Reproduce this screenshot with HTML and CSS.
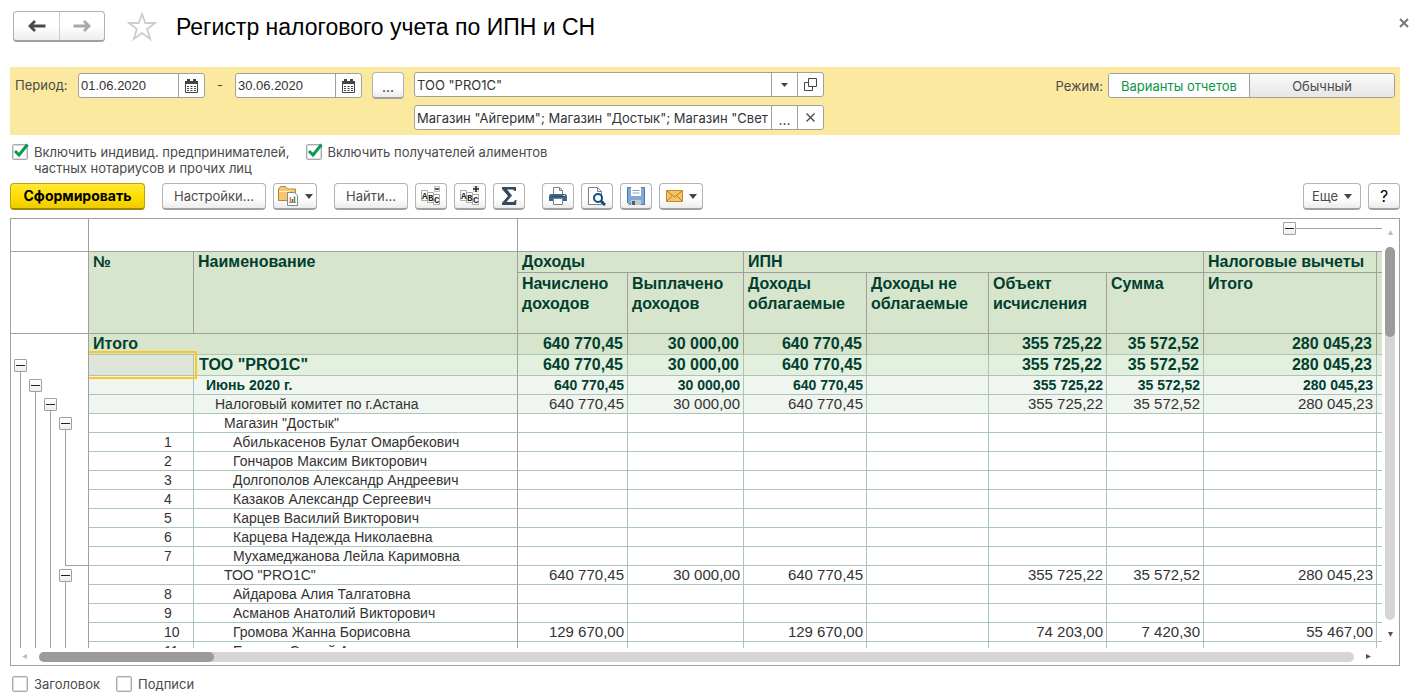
FILE: index.html
```html
<!DOCTYPE html>
<html lang="ru">
<head>
<meta charset="utf-8">
<title>Регистр налогового учета по ИПН и СН</title>
<link rel="stylesheet" href="styles.css">
</head>
<body>
<main class="page">
  <header class="titlebar">
    <div class="nav">
      <button type="button" class="nav-btn" aria-label="Назад"><svg width="18" height="12" viewBox="0 0 18 12"><path d="M7 1 2 6l5 5M2.500 6H17.500" fill="none" stroke="#4a4a4a" stroke-width="2.800"/></svg></button>
      <button type="button" class="nav-btn" aria-label="Вперед"><svg width="18" height="12" viewBox="0 0 18 12"><path d="M11 1l5 5-5 5M15.500 6H.5" fill="none" stroke="#a8a8a8" stroke-width="2.800"/></svg></button>
    </div>
    <button type="button" class="star" aria-label="Избранное"><svg width="30" height="29" viewBox="0 0 30 29"><path d="M15 2l3.300 9H28l-7.800 6 3 10L15 21l-8.200 6 3-10L2 11h9.700z" fill="#fff" stroke="#c9ced3" stroke-width="1.800"/></svg></button>
    <h1>Регистр налогового учета по ИПН и СН</h1>
    <button type="button" class="close" aria-label="Закрыть"><svg width="10" height="10" viewBox="0 0 10 10"><path d="M1 1l8 8M9 1 1 9" stroke="#777" stroke-width="2"/></svg></button>
  </header>

  <section class="filters">
    <label class="period" for="from">Период:</label>
    <div class="field date">
      <input id="from" type="text" value="01.06.2020">
      <button type="button" aria-label="Календарь"><svg width="13" height="14" viewBox="0 0 13 14"><path d="M.5 2.500h12v11H.5z" fill="#fff" stroke="#444"/><path d="M0 2h13v3H0zM2 0h3v3H2zM8 0h3v3H8z" fill="#444"/><path d="M2 7.500h9M2 9.500h9M2 11.500h9" stroke="#444" stroke-width="1" stroke-dasharray="2 1.500"/></svg></button>
    </div>
    <span class="dash">-</span>
    <div class="field date">
      <input type="text" aria-label="Конец периода" value="30.06.2020">
      <button type="button" aria-label="Календарь"><svg width="13" height="14" viewBox="0 0 13 14"><path d="M.5 2.500h12v11H.5z" fill="#fff" stroke="#444"/><path d="M0 2h13v3H0zM2 0h3v3H2zM8 0h3v3H8z" fill="#444"/><path d="M2 7.500h9M2 9.500h9M2 11.500h9" stroke="#444" stroke-width="1" stroke-dasharray="2 1.500"/></svg></button>
    </div>
    <button type="button" class="btn icon more">...</button>
    <div class="orgs">
      <div class="field">
        <input type="text" aria-label="Организация" value='ТОО "PRO1C"'>
        <button type="button" aria-label="Выбрать"><svg width="7" height="4"><path d="M0 0h7L3.500 4z" fill="#444"/></svg></button>
        <button type="button" aria-label="Открыть"><svg width="13" height="13" viewBox="0 0 13 13"><path d="M4.500.5h8v8h-8zM4.500 4.500h-4v8h8v-4" fill="none" stroke="#444"/></svg></button>
      </div>
      <div class="field">
        <input type="text" aria-label="Подразделения" value='Магазин "Айгерим"; Магазин "Достык"; Магазин "Свет'>
        <button type="button" class="pick">...</button>
        <button type="button" aria-label="Очистить"><svg width="9" height="9" viewBox="0 0 9 9"><path d="M.5.5l8 8M8.500.5l-8 8" stroke="#444" stroke-width="1.200"/></svg></button>
      </div>
    </div>
    <div class="mode">
      <span>Режим:</span>
      <div class="segments"><button type="button" class="on">Варианты отчетов</button><button type="button">Обычный</button></div>
    </div>
  </section>

  <section class="options">
    <label class="check"><span class="box"><input type="checkbox" checked><svg width="18" height="18" viewBox="0 0 18 18"><path d="M2 8 6 12 14.500 1.500" fill="none" stroke="#0a9a50" stroke-width="3"/></svg></span><span>Включить индивид. предпринимателей,<br>частных нотариусов и прочих лиц</span></label>
    <label class="check"><span class="box"><input type="checkbox" checked><svg width="18" height="18" viewBox="0 0 18 18"><path d="M2 8 6 12 14.500 1.500" fill="none" stroke="#0a9a50" stroke-width="3"/></svg></span><span>Включить получателей алиментов</span></label>
  </section>

  <section class="toolbar">
    <button type="button" class="btn primary">Сформировать</button>
    <div class="group">
      <button type="button" class="btn settings">Настройки...</button>
      <button type="button" class="btn drop" aria-label="Варианты"><svg width="21" height="20" viewBox="0 0 21 20"><path d="M.5 14.500V3l2-2.500h5l2 2.500h8v11.500z" fill="#f4c870" stroke="#b58632"/><path d="M1 5.500h10l2-2" fill="none" stroke="#fff0c0"/><path d="M9.500 6.500h7l3 3v10h-10z" fill="#fff" stroke="#7d8a96"/><path d="M12.500 11v5.500" stroke="#e08030" stroke-width="1.500"/><path d="M14.500 13v3.500" stroke="#c04040" stroke-width="1.500"/><path d="M16.500 10.500v6" stroke="#2a9a50" stroke-width="1.500"/><path d="M11 16.500h7" stroke="#888"/></svg><svg width="8" height="5"><path d="M0 0h8L4 5z" fill="#444"/></svg></button>
    </div>
    <div class="group">
      <button type="button" class="btn find">Найти...</button>
      <button type="button" class="btn icon" aria-label="Свернуть группы"><svg class="abc" width="20" height="20" viewBox="0 0 20 20"><path d="M.5 4.500h6v10h-6zM6.500 6.500h6v10h-6zM12.500 8.500h6v10h-6z" fill="#fff" stroke="#aaa"/><path d="M13.500.5h5v5h-5z" fill="#fff" stroke="#bbb"/><path d="M14 3h4" stroke="#222" stroke-width="1.500"/><text x="1" y="13">A</text><text x="7" y="15">B</text><text x="13" y="17">C</text></svg></button>
      <button type="button" class="btn icon" aria-label="Развернуть группы"><svg class="abc" width="20" height="20" viewBox="0 0 20 20"><path d="M.5 4.500h6v10h-6zM6.500 6.500h6v10h-6zM12.500 8.500h6v10h-6z" fill="#fff" stroke="#aaa"/><path d="M13.500.5h5v5h-5z" fill="#fff" stroke="#ccc"/><path d="M13 3h6M16 0v6" stroke="#222" stroke-width="1.500"/><text x="1" y="13">A</text><text x="7" y="15">B</text><text x="13" y="17">C</text></svg></button>
      <button type="button" class="btn icon" aria-label="Сумма"><svg width="15" height="18" viewBox="0 0 15 18"><path d="M0 0h14v4h-1.500q-.5-1.500-2-1.500H5L10 8.500 4.500 15H11q1.500 0 2-2h1.500L14 18H0v-2l6-7-6-7z" fill="#34495e"/></svg></button>
    </div>
    <div class="group">
      <button type="button" class="btn icon" aria-label="Печать"><svg width="18" height="18" viewBox="0 0 18 18"><path d="M4.500 8V.5h6l3 3V8" fill="#fff" stroke="#6f8397"/><path d="M10.500.5v3h3" fill="none" stroke="#6f8397"/><path d="M1.500 7h15L18 8.500V14H0V8.500z" fill="#41648a"/><path d="M3 9.500h12" stroke="#2d4a69"/><path d="M4.500 11.500h9v6h-9z" fill="#fff" stroke="#6f8397"/><path d="M14.500 8.500h1.500" stroke="#fff"/></svg></button>
      <button type="button" class="btn icon" aria-label="Просмотр"><svg width="18" height="19" viewBox="0 0 18 19"><path d="M.5.5h9l4 4v13H.5z" fill="#fff" stroke="#6f8397"/><path d="M9.500.5v4h4" fill="none" stroke="#6f8397"/><circle cx="10" cy="11" r="4" fill="#fff" stroke="#0b4f80" stroke-width="2"/><path d="M13 14l4 4" stroke="#0b4f80" stroke-width="3"/></svg></button>
      <button type="button" class="btn icon" aria-label="Сохранить"><svg width="18" height="18" viewBox="0 0 18 18"><path d="M.5.5h17v17h-15l-2-2z" fill="#7fa9d8" stroke="#4c76a6"/><path d="M4 0h10v9H4z" fill="#fff"/><path d="M5.500 3.500h7M5.500 6h7" stroke="#8aa4bf"/><path d="M4 13h10v5H4z" fill="#c4c8c4"/><path d="M5 14h3v4H5z" fill="#52606d"/></svg></button>
      <button type="button" class="btn drop" aria-label="Отправить"><svg width="17" height="12" viewBox="0 0 17 12"><path d="M.5.5h16v11H.5z" fill="#f6c367" stroke="#c08a2c"/><path d="M1 1l7.500 6L16 1M1 11l5-5M16 11l-5-5" fill="none" stroke="#b57d20"/></svg><svg width="8" height="5"><path d="M0 0h8L4 5z" fill="#444"/></svg></button>
    </div>
    <div class="group end">
      <button type="button" class="btn else">Еще<svg width="8" height="5"><path d="M0 0h8L4 5z" fill="#444"/></svg></button>
      <button type="button" class="btn icon help">?</button>
    </div>
  </section>

  <section class="report">
    <div class="sheet">
      <div class="tree">
        <div class="tree-top"></div>
        <div class="tree-head"></div>
        <div class="levels">
          <div class="level l1"><button type="button" class="fold" aria-label="Свернуть"></button><i></i></div>
          <div class="level l2"><button type="button" class="fold" aria-label="Свернуть"></button><i></i></div>
          <div class="level l3"><button type="button" class="fold" aria-label="Свернуть"></button><i></i></div>
          <div class="level l4"><button type="button" class="fold" aria-label="Свернуть"></button><i class="closed"></i><button type="button" class="fold" aria-label="Свернуть"></button><i></i></div>
        </div>
      </div>
      <div class="cells">
      <table>
        <colgroup><col class="c-num"><col class="c-name"><col class="c-acc"><col class="c-paid"><col class="c-tax"><col class="c-free"><col class="c-obj"><col class="c-sum"><col class="c-ded"><col></colgroup>
        <thead>
          <tr class="strip"><td colspan="2"></td><td colspan="6" class="open"></td><td colspan="2" class="open"><div class="colfold"><button type="button" class="fold" aria-label="Свернуть"></button><i></i></div></td></tr>
          <tr class="h1"><th rowspan="2">№</th><th rowspan="2">Наименование</th><th colspan="2">Доходы</th><th colspan="4">ИПН</th><th>Налоговые вычеты</th><th></th></tr>
          <tr class="h2"><th>Начислено доходов</th><th>Выплачено доходов</th><th>Доходы облагаемые</th><th>Доходы не облагаемые</th><th>Объект исчисления</th><th>Сумма</th><th>Итого</th><th></th></tr>
        </thead>
        <tbody>
          <tr class="total"><td colspan="2">Итого</td><td>640 770,45</td><td>30 000,00</td><td>640 770,45</td><td></td><td>355 725,22</td><td>35 572,52</td><td>280 045,23</td><td></td></tr>
          <tr class="org"><td class="num selected"></td><td class="name">ТОО "PRO1C"</td><td>640 770,45</td><td>30 000,00</td><td>640 770,45</td><td></td><td>355 725,22</td><td>35 572,52</td><td>280 045,23</td><td></td></tr>
          <tr class="month"><td class="num"></td><td class="name">Июнь 2020 г.</td><td>640 770,45</td><td>30 000,00</td><td>640 770,45</td><td></td><td>355 725,22</td><td>35 572,52</td><td>280 045,23</td><td></td></tr>
          <tr class="office"><td class="num"></td><td class="name">Налоговый комитет по г.Астана</td><td>640 770,45</td><td>30 000,00</td><td>640 770,45</td><td></td><td>355 725,22</td><td>35 572,52</td><td>280 045,23</td><td></td></tr>
          <tr class="unit"><td class="num"></td><td class="name">Магазин "Достык"</td><td></td><td></td><td></td><td></td><td></td><td></td><td></td><td></td></tr>
          <tr><td class="num">1</td><td class="name">Абилькасенов Булат Омарбекович</td><td></td><td></td><td></td><td></td><td></td><td></td><td></td><td></td></tr>
          <tr><td class="num">2</td><td class="name">Гончаров Максим Викторович</td><td></td><td></td><td></td><td></td><td></td><td></td><td></td><td></td></tr>
          <tr><td class="num">3</td><td class="name">Долгополов Александр Андреевич</td><td></td><td></td><td></td><td></td><td></td><td></td><td></td><td></td></tr>
          <tr><td class="num">4</td><td class="name">Казаков Александр Сергеевич</td><td></td><td></td><td></td><td></td><td></td><td></td><td></td><td></td></tr>
          <tr><td class="num">5</td><td class="name">Карцев Василий Викторович</td><td></td><td></td><td></td><td></td><td></td><td></td><td></td><td></td></tr>
          <tr><td class="num">6</td><td class="name">Карцева Надежда Николаевна</td><td></td><td></td><td></td><td></td><td></td><td></td><td></td><td></td></tr>
          <tr><td class="num">7</td><td class="name">Мухамеджанова Лейла Каримовна</td><td></td><td></td><td></td><td></td><td></td><td></td><td></td><td></td></tr>
          <tr class="unit"><td class="num"></td><td class="name">ТОО "PRO1C"</td><td>640 770,45</td><td>30 000,00</td><td>640 770,45</td><td></td><td>355 725,22</td><td>35 572,52</td><td>280 045,23</td><td></td></tr>
          <tr><td class="num">8</td><td class="name">Айдарова Алия Талгатовна</td><td></td><td></td><td></td><td></td><td></td><td></td><td></td><td></td></tr>
          <tr><td class="num">9</td><td class="name">Асманов Анатолий Викторович</td><td></td><td></td><td></td><td></td><td></td><td></td><td></td><td></td></tr>
          <tr><td class="num">10</td><td class="name">Громова Жанна Борисовна</td><td>129 670,00</td><td></td><td>129 670,00</td><td></td><td>74 203,00</td><td>7 420,30</td><td>55 467,00</td><td></td></tr>
          <tr><td class="num">11</td><td class="name">Егорова Сергей Алексеевич</td><td></td><td></td><td></td><td></td><td></td><td></td><td></td><td></td></tr>
        </tbody>
      </table>
      </div>
    </div>
    <div class="vbar"><svg width="5" height="5"><path d="M2.500 0 5 5H0z" fill="#bbb"/></svg><div class="track"><div class="thumb"></div></div><svg width="5" height="5"><path d="M0 0h5L2.500 5z" fill="#555"/></svg></div>
    <div class="hbar"><svg width="5" height="5"><path d="M5 0v5L0 2.500z" fill="#bbb"/></svg><div class="track"><div class="thumb"></div></div><svg width="5" height="5"><path d="M0 0l5 2.500L0 5z" fill="#555"/></svg></div>
  </section>

  <footer class="options foot">
    <label class="check"><span class="box"><input type="checkbox"></span><span>Заголовок</span></label>
    <label class="check"><span class="box"><input type="checkbox"></span><span>Подписи</span></label>
  </footer>
</main>
</body>
</html>
```

FILE: styles.css
```css
* { box-sizing: border-box; }
body { margin: 0; background: #fff; color: #4a4a4a; font: 13px/16px Inter, Roboto, sans-serif; }
button, input { font: inherit; color: inherit; margin: 0; padding: 0; }
button { border: 0; background: none; display: flex; align-items: center; justify-content: center; }
svg { display: block; flex: none; }

.page { height: 100vh; display: flex; flex-direction: column; padding: 0 18px 8px 10px; }

.titlebar { display: flex; align-items: center; height: 67px; padding: 0 0 14px 3px; flex: none; }
.nav { display: flex; height: 31px; border: 1px solid #b0b0b0; border-bottom: 2px solid #a0a0a0; border-radius: 4px; background: linear-gradient(#fff 50%, #ededed); }
.nav-btn { width: 45px; }
.nav-btn + .nav-btn { border-left: 1px solid #ccc; }
.star { margin: 0 19px 0 22px; }
h1 { margin: 0; flex: 1; color: #000; font: 23px/28px "Liberation Sans", Arial, sans-serif; }
.close { margin: -8px -9px 0 0; }

.filters { display: flex; align-items: flex-start; background: #fce9a0; height: 68px; padding: 5px; flex: none; }
.period { width: 63px; line-height: 26px; }
.field { display: flex; height: 25px; border: 1px solid #a0a0a0; border-radius: 3px; background: #fff; overflow: hidden; color: #333; }
.field input { flex: 1; min-width: 0; border: 0; outline: 0; background: none; padding: 0 0 0 2px; }
.field button { width: 26px; border-left: 1px solid #a0a0a0; }
.date { width: 127px; margin-top: 1px; font-family: "Liberation Sans", Arial, sans-serif; }
.dash { width: 30px; text-align: center; line-height: 26px; }
.btn { height: 27px; border: 1px solid #b4b4b4; border-bottom: 2px solid #a0a0a0; border-radius: 4px; background: linear-gradient(#fff 60%, #ececec); }
.icon { width: 32px; }
.more { margin: 0 10px; color: #222; }
.more, .pick { padding-top: 4px; font-size: 14px; }
.orgs { width: 410px; display: flex; flex-direction: column; gap: 8px; }
.mode { margin: 1px 0 0 auto; display: flex; align-items: center; gap: 5px; }
.segments { display: flex; height: 25px; border: 1px solid #a0a0a0; border-radius: 3px; overflow: hidden; }
.segments button { width: 145px; background: linear-gradient(#fafafa, #e6e6e6); border-left: 1px solid #a0a0a0; }
.segments .on { width: 140px; background: #fff; color: #0a9648; border: 0; }

.options { display: flex; gap: 16px; padding: 9px 0 7px 2px; flex: none; }
.check { display: flex; gap: 6px; }
.box { position: relative; width: 16px; height: 16px; }
.box input { appearance: none; display: block; width: 16px; height: 16px; border: 1px solid #aaa; border-radius: 2px; background: #fff; box-shadow: inset 0 0 0 1px #ddd; }
.box svg { position: absolute; left: 1px; top: -1px; }

.toolbar { display: flex; gap: 17px; height: 35px; flex: none; }
.group { display: flex; gap: 7px; }
.end { margin-left: auto; }
.primary { width: 135px; color: #000; font-size: 14px; font-weight: bold; border-color: #bfa000; border-bottom-color: #a08600; background: linear-gradient(#ffe83a, #ffe000 50%, #edcb00); }
.settings { width: 104px; }
.find { width: 74px; }
.drop { width: 44px; gap: 6px; }
.else { width: 58px; gap: 6px; }
.help { color: #000; font-size: 16px; }
.abc text { font: bold 9px "Liberation Mono", monospace; fill: #222; }

.report { flex: 1; min-height: 0; border: 1px solid #a0a0a0; display: grid; grid-template: minmax(0, 1fr) 17px / minmax(0, 1fr) 17px; }
.sheet { display: flex; overflow: hidden; }
.tree { width: 78px; border-right: 1px solid #a0a0a0; display: flex; flex-direction: column; flex: none; }
.tree-top { height: 33px; border-bottom: 1px solid #a0a0a0; flex: none; }
.tree-head { height: 82px; border-bottom: 1px solid #a0a0a0; flex: none; }
.levels { flex: 1; display: flex; gap: 2px; padding-left: 3px; }
.level { width: 13px; display: flex; flex-direction: column; }
.level i { flex: 1; margin-left: 6px; border-left: 1px solid #a0a0a0; }
.level .closed { flex: 0 0 136px; width: 23px; border-bottom: 1px solid #a0a0a0; margin-bottom: 3px; }
.l1 { padding-top: 25px; }
.l2 { padding-top: 45px; }
.l3 { padding-top: 64px; }
.l4 { padding-top: 83px; }
.fold { width: 13px; height: 13px; flex: none; border: 1px solid #a0a0a0; border-radius: 1px; background: linear-gradient(#fff, #eee); }
.fold::before { content: ""; width: 9px; height: 1px; background: #222; }
.colfold { display: flex; align-items: center; padding: 0 0 13px 79px; }
.colfold i { flex: 1; height: 1px; background: #a0a0a0; }

.cells { flex: 1; min-width: 0; overflow: hidden; }
table { width: 100%; table-layout: fixed; border-collapse: separate; border-spacing: 0; color: #333; font: 15px/18px "Liberation Sans", Arial, sans-serif; }
.c-num { width: 105px; }
.c-name { width: 324px; }
.c-acc { width: 110px; }
.c-paid { width: 116px; }
.c-tax { width: 123px; }
.c-free { width: 122px; }
.c-obj { width: 118px; }
.c-sum { width: 97px; }
.c-ded { width: 173px; }
td, th { padding: 0; border: 0 solid #a9c6b9; border-width: 0 1px 1px 0; white-space: nowrap; overflow: hidden; }
tr > :last-child { border-right: 0; }
thead td, thead th { border-color: #a0a0a0; }
.strip td { height: 33px; }
.strip .open { border-right: 0; }
th { background: #d8e5cd; color: #003f2f; font: bold 16px/20px "Liberation Sans", Arial, sans-serif; text-align: left; vertical-align: top; padding-left: 4px; white-space: normal; }
.h1 th { height: 21px; }
.h2 th { height: 61px; padding-top: 1px; }
tbody td { height: 19px; text-align: right; padding-right: 3px; }
.num, .name { text-align: left; font-size: 14px; }
.num { padding-left: 75px; }
.name { padding-left: 39px; border-right-color: #a0a0a0; }
.total td, .org td { height: 21px; line-height: 20px; font-size: 16px; font-weight: bold; color: #003f2f; padding-right: 4px; }
.total td { background: #d8e5cd; border-right-color: #a0a0a0; }
.total td:first-child { text-align: left; padding-left: 4px; }
.org td { background: #e4f0de; }
.org .name { padding-left: 5px; }
.month td { background: #f0f5ef; font-weight: bold; color: #003f2f; font-size: 14px; }
.month .name { padding-left: 12px; }
.office td { background: #f0f5ef; }
.office .name { padding-left: 21px; }
.unit .name { padding-left: 30px; }
.org .selected { position: relative; overflow: visible; background: #dfe6d9; }
.selected::after { content: ""; position: absolute; inset: -4px -4px -4px 0; border: 2px solid #fcc820; border-left: 0; }

.vbar { display: flex; flex-direction: column; align-items: center; padding: 11px 1px 11px 0; gap: 12px; }
.vbar .track { flex: 1; width: 10px; }
.vbar .thumb { height: 90px; }
.hbar { display: flex; align-items: center; padding: 0 11px; gap: 12px; }
.hbar .track { flex: 1; height: 10px; }
.hbar .thumb { width: 175px; height: 10px; }
.track { background: #d5d5d5; border-radius: 5px; }
.thumb { background: #9b9b9b; border-radius: 5px; }
.foot { padding: 10px 0 0 2px; }
```
